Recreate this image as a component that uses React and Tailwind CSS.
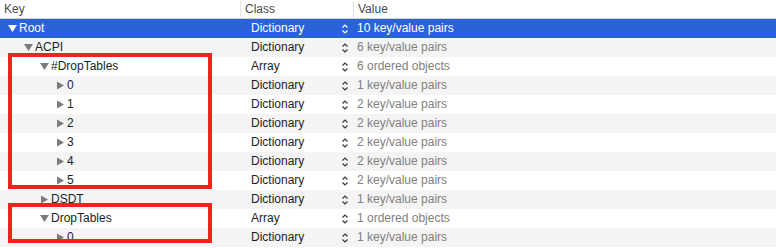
import React from 'react';

const rows = [
  { key: 'Root', level: 0, open: true, cls: 'Dictionary', value: '10 key/value pairs' },
  { key: 'ACPI', level: 1, open: true, cls: 'Dictionary', value: '6 key/value pairs' },
  { key: '#DropTables', level: 2, open: true, cls: 'Array', value: '6 ordered objects' },
  { key: '0', level: 3, open: false, cls: 'Dictionary', value: '1 key/value pairs' },
  { key: '1', level: 3, open: false, cls: 'Dictionary', value: '2 key/value pairs' },
  { key: '2', level: 3, open: false, cls: 'Dictionary', value: '2 key/value pairs' },
  { key: '3', level: 3, open: false, cls: 'Dictionary', value: '2 key/value pairs' },
  { key: '4', level: 3, open: false, cls: 'Dictionary', value: '2 key/value pairs' },
  { key: '5', level: 3, open: false, cls: 'Dictionary', value: '2 key/value pairs' },
  { key: 'DSDT', level: 2, open: false, cls: 'Dictionary', value: '1 key/value pairs' },
  { key: 'DropTables', level: 2, open: true, cls: 'Array', value: '1 ordered objects' },
  { key: '0', level: 3, open: false, cls: 'Dictionary', value: '1 key/value pairs' },
];

function Disclosure({ open, selected }) {
  const fill = selected ? '#ffffff' : '#7b7b7b';
  return (
    <svg width="11" height="19" viewBox="0 0 11 19" className="shrink-0">
      {open ? (
        <polygon points="0,6 9,6 4.5,13" fill={fill} />
      ) : (
        <polygon points="1,5.5 8,9.5 1,13.5" fill={fill} />
      )}
    </svg>
  );
}

function Stepper({ selected }) {
  const stroke = selected ? '#ffffff' : '#3a3a3a';
  return (
    <svg width="8" height="12" viewBox="0 0 8 12" className="shrink-0">
      <path d="M1.5 4.5 L4 2 L6.5 4.5" fill="none" stroke={stroke} strokeWidth="1.2" />
      <path d="M1.5 7.5 L4 10 L6.5 7.5" fill="none" stroke={stroke} strokeWidth="1.2" />
    </svg>
  );
}

export default function App() {
  return (
    <div
      className="relative w-[776px] h-[248px] overflow-hidden bg-white text-[12px]"
      style={{ fontFamily: '"Liberation Sans", Arial, sans-serif' }}
    >
      {/* Header */}
      <div className="grid grid-cols-[240px_113px_1fr] h-[19px] border-b border-[#d2d2d2] text-[#4a4a4a] leading-[18px]">
        <div className="pl-[4px]">Key</div>
        <div className="pl-[4px] border-l border-[#e4e4e4] my-[1px] leading-[16px]">Class</div>
        <div className="pl-[4px] border-l border-[#e4e4e4] my-[1px] leading-[16px]">Value</div>
      </div>

      {/* Rows */}
      {rows.map((row, i) => {
        const selected = i === 0;
        const bg = selected ? 'bg-[#2a62d8]' : i % 2 === 1 ? 'bg-[#f4f4f4]' : 'bg-white';
        return (
          <div key={i} className={`grid grid-cols-[240px_113px_1fr] h-[19px] leading-[19px] ${bg}`}>
            <div className={`flex items-center ${selected ? 'text-white' : 'text-[#1e1e1e]'}`}>
              <div className="shrink-0" style={{ width: 8 + row.level * 16 }} />
              <Disclosure open={row.open} selected={selected} />
              <span>{row.key}</span>
            </div>
            <div className={`flex items-center justify-between pl-[11px] pr-[4px] ${selected ? 'text-white' : 'text-[#1e1e1e]'}`}>
              <span>{row.cls}</span>
              <Stepper selected={selected} />
            </div>
            <div className={`pl-[4px] ${selected ? 'text-white' : 'text-[#808080]'}`}>{row.value}</div>
          </div>
        );
      })}

      {/* Annotation boxes */}
      <div className="absolute left-[8px] top-[53px] w-[204px] h-[136px] border-4 border-[#f0231d]" />
      <div className="absolute left-[8px] top-[203px] w-[204px] h-[40px] border-4 border-[#f0231d]" />
    </div>
  );
}
